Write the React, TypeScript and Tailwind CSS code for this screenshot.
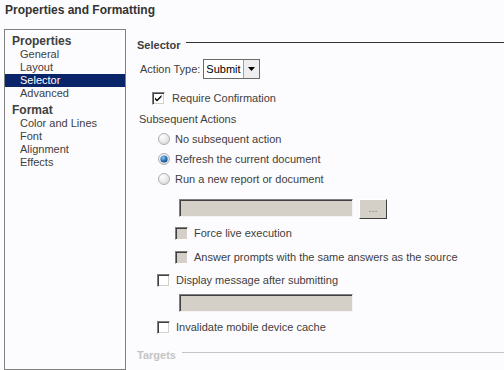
import React from "react"

const navItems = [
  { label: "Properties", head: true },
  { label: "General" },
  { label: "Layout" },
  { label: "Selector", selected: true },
  { label: "Advanced" },
  { label: "Format", head: true },
  { label: "Color and Lines" },
  { label: "Font" },
  { label: "Alignment" },
  { label: "Effects" },
]

function CheckBox({ checked = false, disabled = false }: { checked?: boolean; disabled?: boolean }) {
  return (
    <span
      className={`relative inline-block w-[13px] h-[13px] shrink-0 border border-t-[#808080] border-l-[#808080] border-r-white border-b-white shadow-[inset_1px_1px_0_#404040,inset_-1px_-1px_0_#d4d0c8] ${
        disabled ? "bg-[#d4d0c8]" : "bg-white"
      }`}
    >
      {checked && (
        <svg className="absolute left-[1px] top-[1px]" width="9" height="9" viewBox="0 0 9 9">
          <path d="M1 3.5 L3 5.5 L7.5 1 L7.5 3 L3 7.5 L1 5.5 Z" fill="#000" />
        </svg>
      )}
    </span>
  )
}

function Radio({ checked = false }: { checked?: boolean }) {
  return (
    <svg width="12" height="12" viewBox="0 0 12 12" className="shrink-0">
      <defs>
        <radialGradient id="rg" cx="0.35" cy="0.3" r="0.8">
          <stop offset="0" stopColor="#ffffff" />
          <stop offset="1" stopColor="#d8d8d8" />
        </radialGradient>
        <radialGradient id="dot" cx="0.4" cy="0.35" r="0.7">
          <stop offset="0" stopColor="#9cc8ee" />
          <stop offset="0.5" stopColor="#2f7fc8" />
          <stop offset="1" stopColor="#0b3f7e" />
        </radialGradient>
      </defs>
      <circle cx="6" cy="6" r="5.5" fill="url(#rg)" stroke="#b0b0b0" strokeWidth="1" />
      {checked && <circle cx="6" cy="6" r="3.6" fill="url(#dot)" />}
    </svg>
  )
}

function SunkenField() {
  return (
    <div className="w-[174px] h-[18px] bg-[#d4d0c8] border border-t-[#808080] border-l-[#808080] border-r-[#f4f4f4] border-b-[#f4f4f4] shadow-[inset_1px_1px_0_#404040]" />
  )
}

function Legend({ title, muted = false }: { title: string; muted?: boolean }) {
  return (
    <div className="flex items-start h-[13px]">
      <span className={`font-bold leading-[13px] ${muted ? "text-[#c4c4c4]" : "text-[#404040]"}`}>{title}</span>
      <div className={`flex-1 ml-[6px] mt-[3px] h-px ${muted ? "bg-[#c4c4c4]" : "bg-[#333]"}`} />
    </div>
  )
}

export default function App() {
  return (
    <div className="w-[504px] h-[370px] overflow-hidden bg-[#fcfcfe] text-[11px] leading-[13px] text-[#404040] font-['Liberation_Sans',Arial,sans-serif]">
      <div className="h-[29px] pl-[5px] pt-[4px] font-bold text-[#333] text-[12px]">Properties and Formatting</div>

      <div className="flex">
        {/* left nav */}
        <div className="ml-[4px] w-[122px] h-[341px] border border-[#808080] pt-[5px] shrink-0">
          {navItems.map((it) => (
            <div
              key={it.label}
              className={`h-[13px] ${it.head ? "pl-[7px] font-bold text-[12px]" : "pl-[15px]"} ${
                it.head && it.label === "Format" ? "mt-[4px]" : ""
              } ${it.selected ? "bg-[#0a246a] text-white" : "text-[#404040]"}`}
            >
              {it.label}
            </div>
          ))}
        </div>

        {/* right panel */}
        <div className="flex-1 pl-[11px] pt-[10px]">
          <Legend title="Selector" />

          <div className="flex items-center mt-[7px] pl-[3px] h-[20px]">
            <span>Action Type:</span>
            <div className="ml-[3px] flex h-[20px] w-[57px] border border-[#6a6a6a] bg-white">
              <span className="flex-1 pl-[2px] leading-[18px] text-black">Submit</span>
              <span className="w-[16px] flex items-center justify-center bg-[#eeeeee] border-l border-[#a0a0a0]">
                <svg width="7" height="4" viewBox="0 0 7 4">
                  <path d="M0 0 H7 L3.5 4 Z" fill="#000" />
                </svg>
              </span>
            </div>
          </div>

          <div className="flex items-center gap-[7px] mt-[13px] pl-[15px] h-[13px]">
            <CheckBox checked />
            <span>Require Confirmation</span>
          </div>

          <div className="mt-[8px] pl-[2px] h-[13px]">Subsequent Actions</div>

          <div className="flex flex-col gap-[8px] mt-[7px] pl-[21px]">
            {[
              ["No subsequent action", false],
              ["Refresh the current document", true],
              ["Run a new report or document", false],
            ].map(([t, c]) => (
              <div key={t as string} className="flex items-center gap-[5px] h-[12px]">
                <Radio checked={c as boolean} />
                <span>{t as string}</span>
              </div>
            ))}
          </div>

          <div className="flex items-start gap-[6px] mt-[14px] pl-[42px]">
            <SunkenField />
            <div className="w-[28px] h-[20px] bg-[#d4d0c8] border border-t-white border-l-white border-r-[#404040] border-b-[#404040] text-[#808080] text-center leading-[16px]">
              ...
            </div>
          </div>

          <div className="flex items-center gap-[6px] mt-[8px] pl-[38px] h-[13px]">
            <CheckBox disabled />
            <span>Force live execution</span>
          </div>

          <div className="flex items-center gap-[6px] mt-[11px] pl-[38px] h-[13px]">
            <CheckBox disabled />
            <span>Answer prompts with the same answers as the source</span>
          </div>

          <div className="flex items-center gap-[6px] mt-[10px] pl-[20px] h-[13px]">
            <CheckBox />
            <span>Display message after submitting</span>
          </div>

          <div className="mt-[7px] pl-[42px]">
            <SunkenField />
          </div>

          <div className="flex items-center gap-[6px] mt-[9px] pl-[20px] h-[13px]">
            <CheckBox />
            <span>Invalidate mobile device cache</span>
          </div>

          <div className="mt-[15px]">
            <Legend title="Targets" muted />
          </div>

          <div className="flex mt-[6px] pl-[16px] gap-[230px] text-[#d4d4d4]">
            <span>Available:</span>
            <span>Selected:</span>
          </div>
        </div>
      </div>
    </div>
  )
}
